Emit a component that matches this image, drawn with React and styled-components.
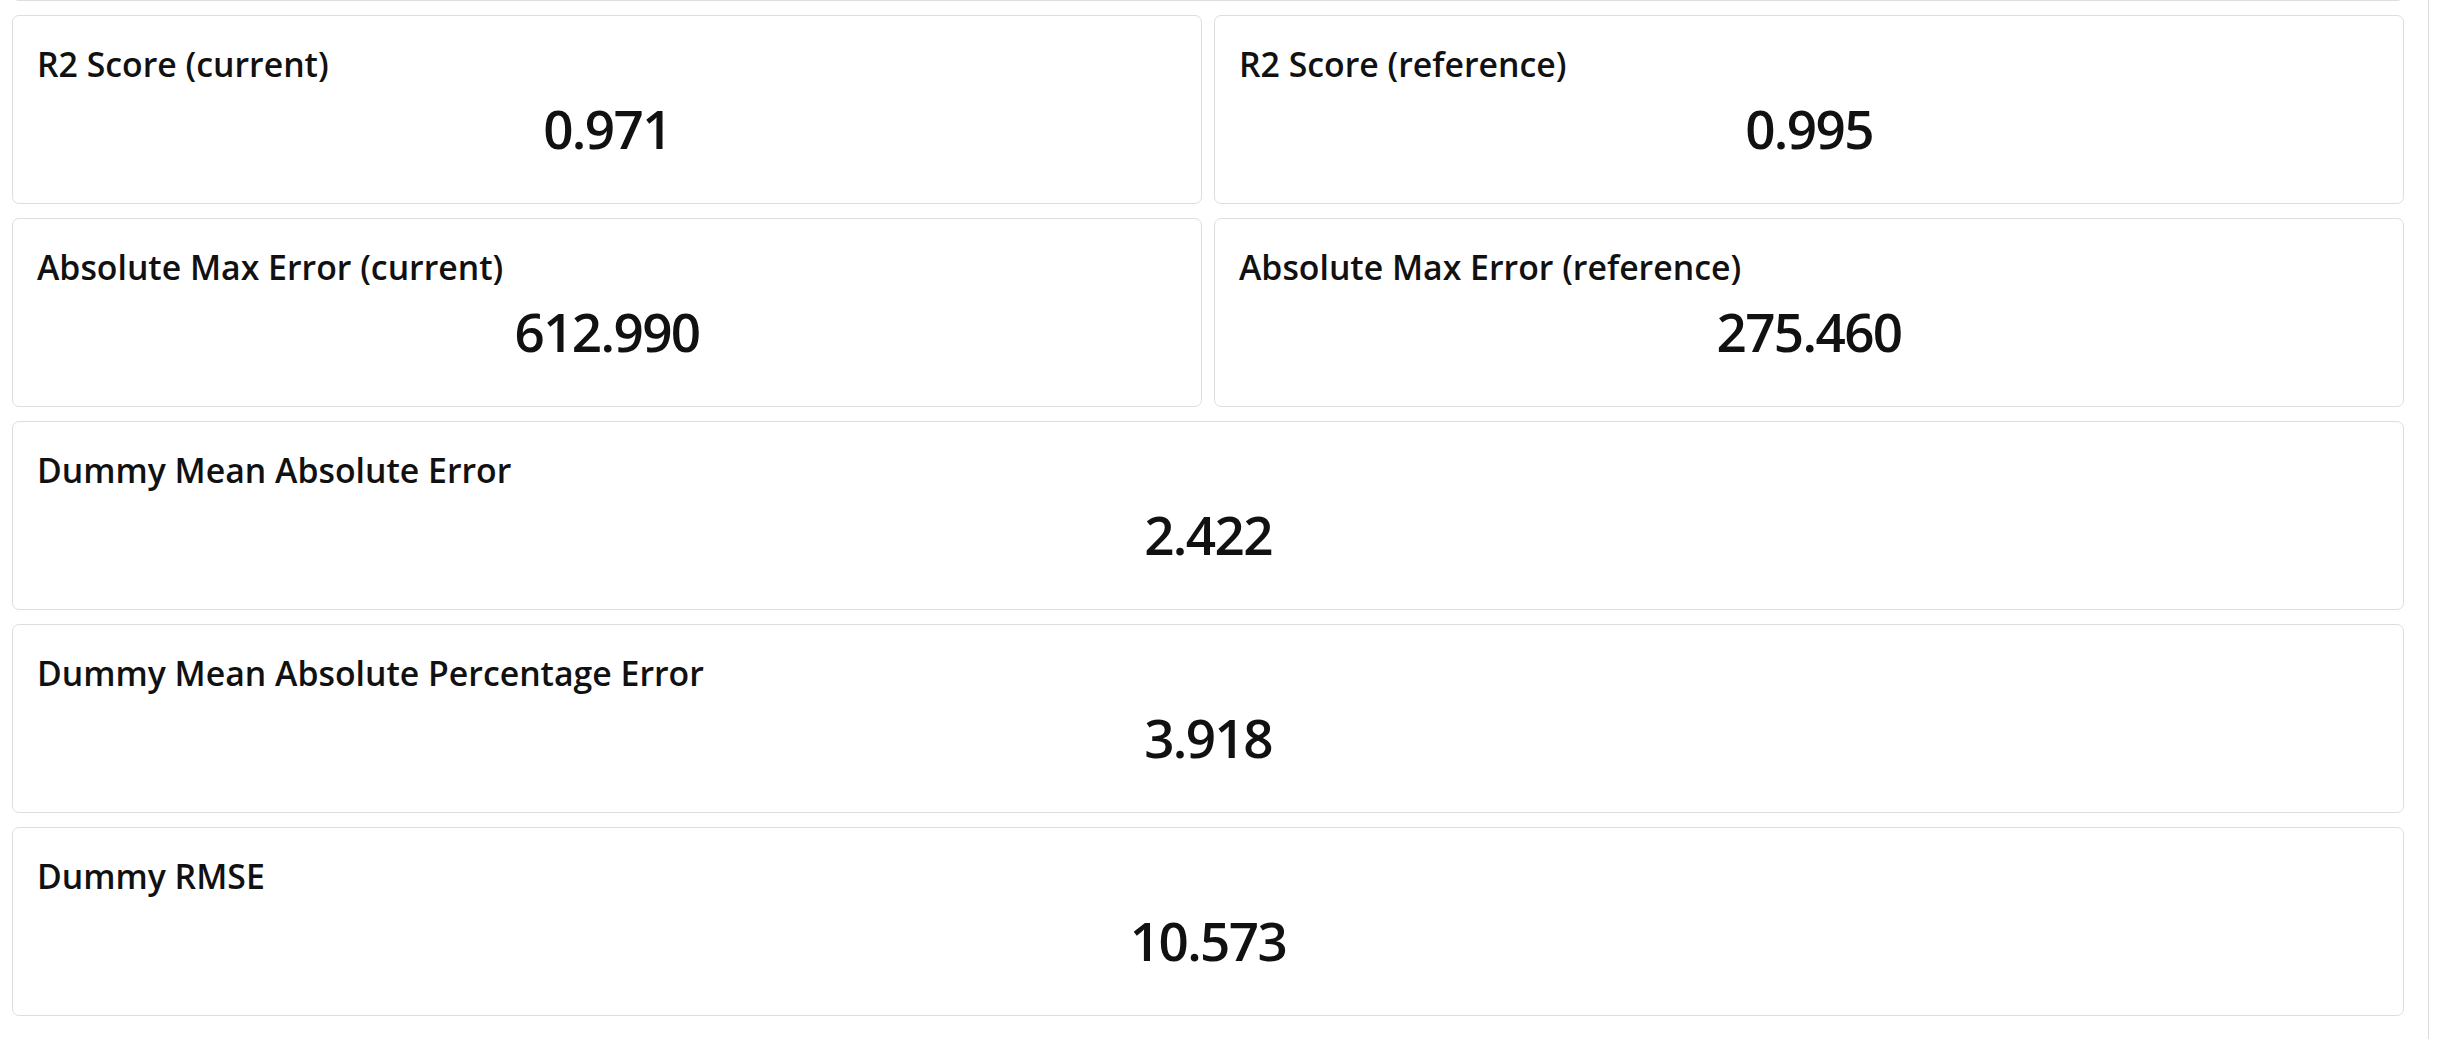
import React from 'react';
import styled, { createGlobalStyle } from 'styled-components';

const GlobalStyle = createGlobalStyle`
  html, body {
    margin: 0;
    padding: 0;
    background: #ffffff;
    overflow: hidden;
  }
  body {
    font-family: "Open Sans", "Noto Sans", "Liberation Sans", sans-serif;
    color: #111111;
  }
`;

const Page = styled.div`
  display: flex;
  height: 100vh;
  overflow: hidden;
`;

const Main = styled.main`
  flex: 1;
  padding: 0 24px 0 12px;
  overflow: hidden;
`;

const SidePanel = styled.aside`
  width: 17px;
  flex-shrink: 0;
  border-left: 1px solid #dcdcdc;
`;

const MetricsGrid = styled.div`
  display: grid;
  grid-template-columns: 1fr 1fr;
  column-gap: 12px;
  row-gap: 14px;
  /* list is scrolled: only the bottom edge of the previous card shows */
  margin-top: -188px;
`;

const Card = styled.section`
  grid-column: ${(p) => (p.$wide ? '1 / -1' : 'auto')};
  height: 189px;
  box-sizing: border-box;
  border: 1px solid #dedede;
  border-radius: 7px;
  background: #ffffff;
  padding: 28px 24px 0;
  display: flex;
  flex-direction: column;
`;

const Label = styled.h5`
  margin: 0;
  font-size: 33.8px;
  font-weight: 600;
  line-height: 1.2;
  color: #111111;
`;

const Value = styled.div`
  margin-top: 12px;
  text-align: center;
  font-size: 53px;
  font-weight: 600;
  letter-spacing: -1.6px;
  line-height: 1.2;
  color: #111111;
`;

const metrics = [
  { label: '', value: '', wide: true, hidden: true },
  { label: 'R2 Score (current)', value: '0.971' },
  { label: 'R2 Score (reference)', value: '0.995' },
  { label: 'Absolute Max Error (current)', value: '612.990' },
  { label: 'Absolute Max Error (reference)', value: '275.460' },
  { label: 'Dummy Mean Absolute Error', value: '2.422', wide: true },
  { label: 'Dummy Mean Absolute Percentage Error', value: '3.918', wide: true },
  { label: 'Dummy RMSE', value: '10.573', wide: true },
];

const App = () => {
  return (
    <>
      <GlobalStyle />
      <Page>
        <Main>
          <MetricsGrid>
            {metrics.map((m, i) => (
              <Card key={i} $wide={m.wide}>
                {!m.hidden && (
                  <>
                    <Label>{m.label}</Label>
                    <Value>{m.value}</Value>
                  </>
                )}
              </Card>
            ))}
          </MetricsGrid>
        </Main>
        <SidePanel />
      </Page>
    </>
  );
};

export default App;
